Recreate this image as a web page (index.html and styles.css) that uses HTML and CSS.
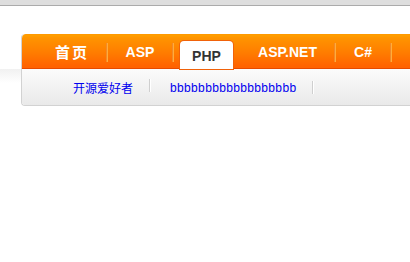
FILE: index.html
```html
<!DOCTYPE html>
<html>
<head>
<meta charset="utf-8">
<link rel="stylesheet" href="styles.css">
</head>
<body>
<div class="topbar"></div>
<div class="nav">
  <ul class="tabs">
    <li class="tab home">首页</li>
    <li class="tab asp">ASP</li>
    <li class="tab php active"><span>PHP</span></li>
    <li class="tab aspnet">ASP.NET</li>
    <li class="tab cs">C#</li>
    <li class="tab more"></li>
  </ul>
  <div class="sub">
    <a class="sublink first">开源爱好者</a>
    <a class="sublink second">bbbbbbbbbbbbbbbbbb</a>
  </div>
</div>
</body>
</html>
```
FILE: styles.css
```css
html, body { margin: 0; padding: 0; overflow: hidden; }
html { background: #fff; }
body {
  font-family: "Liberation Sans", Arial, "Noto Sans CJK SC", sans-serif;
  background: linear-gradient(to bottom, #fff 69px, #f1f1f1 69px, #f8f8f8 76px, #fff 83px) no-repeat;
  min-height: 262px;
}
.topbar { height: 5px; background: #dedede; border-bottom: 1px solid #ababab; }
.nav {
  margin: 28px 0 0 21px;
  border: 1px solid #d2d2d2;
  border-top: none;
  border-right: none;
  border-radius: 4px 0 0 4px;
  overflow: hidden;
}
.tabs {
  list-style: none;
  margin: 0;
  padding: 0 0 0 15px;
  height: 33px;
  display: flex;
  background: linear-gradient(#ffa000 0px, #ff9400 3px, #ff7c00 18px, #ff6300 31px);
  border-top: 1px solid #ff9a00;
  border-bottom: 1px solid #e64a00;
  border-radius: 4px 0 0 0;
}
.tab {
  position: relative;
  flex: none;
  display: flex;
  align-items: center;
  justify-content: center;
  color: #fff;
  font-weight: bold;
  font-size: 14px;
  height: 33px;
}
.tab::after {
  content: "";
  position: absolute;
  right: 0;
  top: 8px;
  height: 19px;
  width: 1px;
  background: #f18a2a;
  box-shadow: 1px 0 0 #ffad3c;
}
.home { width: 70px; font-size: 15px; font-family: "Noto Sans CJK SC", sans-serif; letter-spacing: 2px; }
.asp { width: 66px; }
.php { width: 67px; }
.aspnet { width: 95px; }
.cs { width: 56px; }
.more { width: 60px; }
.php::after, .more::after { display: none; }
.php span {
  position: absolute;
  left: 7px;
  width: 53px;
  top: 6px;
  bottom: -1px;
  background: #fff;
  border-radius: 4px 4px 0 0;
  box-shadow: 0 0 0 1px #f0620a;
  color: #333;
  display: flex;
  align-items: center;
  justify-content: center;
  padding-top: 2px;
  box-sizing: border-box;
}
.sub {
  height: 36px;
  display: flex;
  align-items: center;
  padding-left: 51px;
  padding-top: 1px;
  box-sizing: border-box;
  background: linear-gradient(#fbfbfb, #f2f2f2 50%, #e9e9e9);
  font-size: 12px;
}
.sublink { color: #0000ee; font-family: "Liberation Sans", "Noto Sans CJK SC", sans-serif; position: relative; }
.first { padding-right: 17px; margin-right: 20px; }
.second { padding-right: 17px; letter-spacing: 0.35px; }
.sublink::after {
  content: "";
  position: absolute;
  right: 0;
  top: 0;
  height: 13px;
  width: 1px;
  background: #cfcfcf;
  box-shadow: 1px 0 0 #fff;
}
```
